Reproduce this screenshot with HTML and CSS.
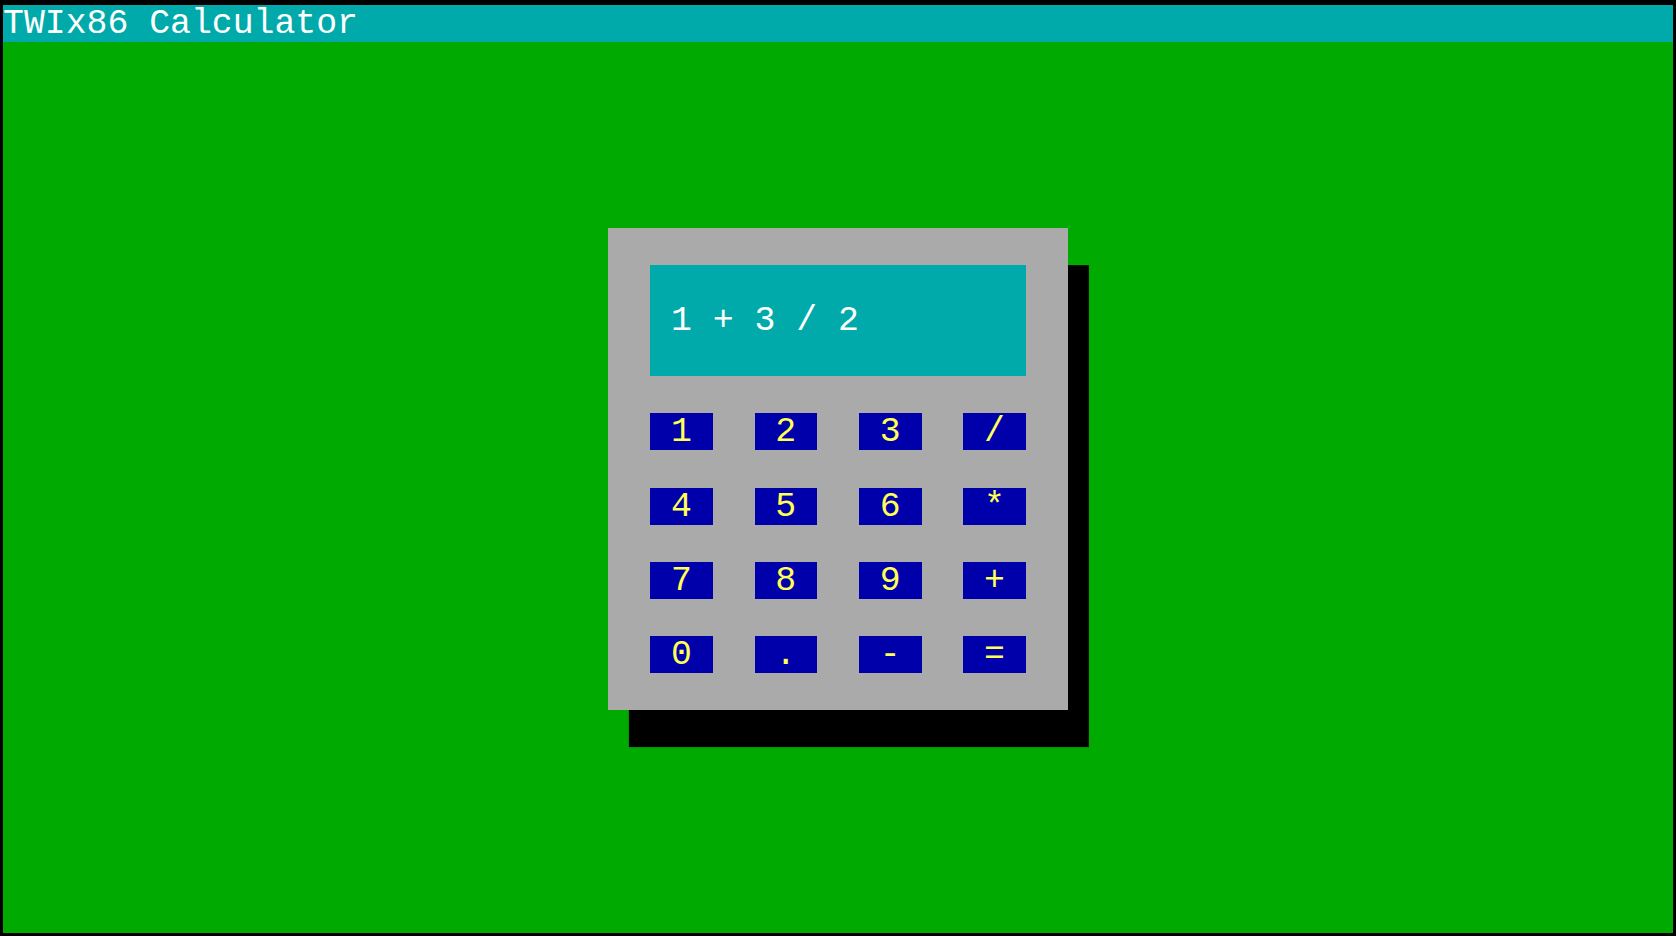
FILE: index.html
```html
<!DOCTYPE html>
<html lang="en">
<head>
<meta charset="UTF-8" />
<meta name="viewport" content="width=device-width, initial-scale=1" />
<title>TWIx86 Calculator</title>
<link rel="stylesheet" href="styles.css">
</head>
<body>
<div class="screen">
  <div class="titlebar">TWIx86 Calculator</div>

  <div class="calc">
    <div class="display"><span id="expr">1 + 3 / 2</span></div>

    <div class="keypad">
      <button class="key">1</button>
      <button class="key">2</button>
      <button class="key">3</button>
      <button class="key">/</button>
      <button class="key">4</button>
      <button class="key">5</button>
      <button class="key">6</button>
      <button class="key">*</button>
      <button class="key">7</button>
      <button class="key">8</button>
      <button class="key">9</button>
      <button class="key">+</button>
      <button class="key">0</button>
      <button class="key">.</button>
      <button class="key">-</button>
      <button class="key">=</button>
    </div>
  </div>
</div>
</body>
</html>
```

FILE: styles.css
```css
/* 80x25 text mode: one cell = 1670/80 x 928/25 */
:root {
  --cw: 20.875px;
  --ch: 37.12px;
}
* { box-sizing: border-box; }
html, body {
  margin: 0; height: 100%;
}
body {
  background: #000;
  padding: 5px 3px 3px 3px;
  font-family: "Liberation Mono", "DejaVu Sans Mono", monospace;
  font-size: 34.8px; line-height: var(--ch);
  overflow: hidden;
}
.screen {
  width: 1670px; height: 928px;
  background: #00aa00;
  display: flex; flex-direction: column; align-items: flex-start;
}
.titlebar {
  width: 100%; height: var(--ch);
  background: #00aaaa; color: #fff;
  white-space: pre;
}
.calc {
  margin-top: calc(5 * var(--ch));
  margin-left: calc(29 * var(--cw));
  width: calc(22 * var(--cw)); height: calc(13 * var(--ch));
  padding: var(--ch) calc(2 * var(--cw));
  background: #aaaaaa;
  box-shadow: var(--cw) var(--ch) 0 #000;
}
.display {
  height: calc(3 * var(--ch));
  background: #00aaaa; color: #fff;
  padding-left: var(--cw);
  display: flex; align-items: center;
  white-space: pre;
}
.keypad {
  margin-top: var(--ch);
  display: grid;
  grid-template-columns: repeat(4, calc(3 * var(--cw)));
  grid-auto-rows: var(--ch);
  column-gap: calc(2 * var(--cw));
  row-gap: var(--ch);
}
.key {
  border: none; padding: 0; margin: 0;
  background: #0000aa; color: #ffff55;
  font: inherit; line-height: var(--ch);
  text-align: center;
  cursor: pointer;
}
```
